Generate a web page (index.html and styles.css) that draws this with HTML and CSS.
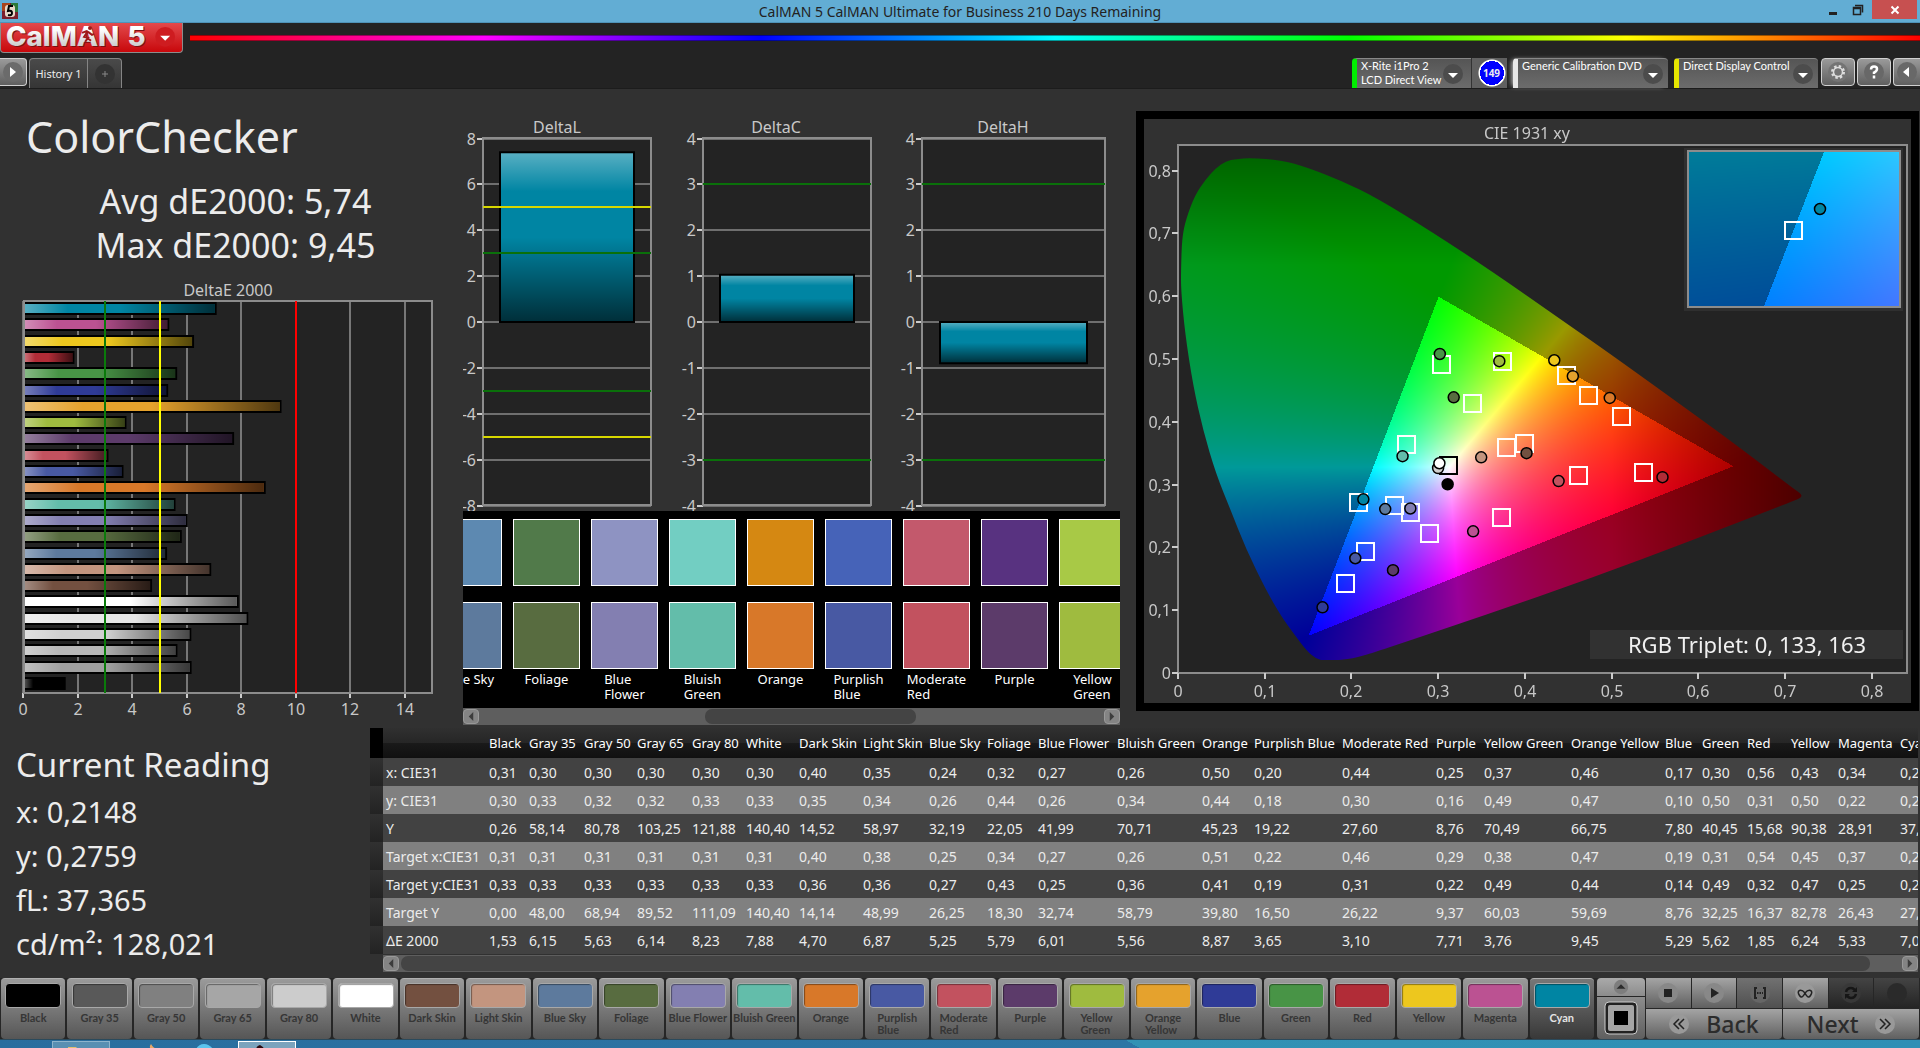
FILE: index.html
```html
<!DOCTYPE html>
<html lang="en">
	<head>
		<meta charset="utf-8">
		<title>CalMAN 5</title>
		<link rel="stylesheet" href="styles.css">
	</head>
	<body>
		<div class="titlebar">
			<svg class="appicon" viewBox="0 0 16 16"><rect width="16" height="16" fill="#7a1f2c"/><rect width="8" height="8" fill="#a8431c"/><rect x="9" width="7" height="9" fill="#2d7a3a"/><rect x="3" y="2" width="10" height="12" rx="3" fill="#e8d8c8"/><path d="M11 3H7L6 8q4-1 4 2t-4 2" fill="none" stroke="#000" stroke-width="2"/></svg>
			<span class="caption">CalMAN 5 CalMAN Ultimate for Business 210 Days Remaining</span>
			<div class="wincontrols">
				<button class="win" aria-label="Minimize"><svg viewBox="0 0 12 12"><path d="M2 9.500h8" stroke="#222" stroke-width="3"/></svg></button>
				<button class="win" aria-label="Restore"><svg viewBox="0 0 12 12"><path d="M1.500 3.500h7v7h-7zM1 4.500h8M3 1.500h7.500v7" fill="none" stroke="#222" stroke-width="1.500"/></svg></button>
				<button class="win close" aria-label="Close"><svg viewBox="0 0 12 12"><path d="M2.500 2.500l7 7M9.500 2.500l-7 7" stroke="#fff" stroke-width="2"/></svg></button>
			</div>
		</div>
		<header class="brandbar">
			<button class="logo" aria-label="CalMAN 5 menu">
				<svg viewBox="0 0 183 31">
					<defs><linearGradient id="metal" x1="0" y1="0" x2="0" y2="1"><stop offset="0.300" stop-color="#fff"/><stop offset="1" stop-color="#b9b9b9"/></linearGradient></defs>
					<text class="logotext shade" x="6" y="24">CalMAN</text><text class="logotext shade" x="129" y="24">5</text>
					<text class="logotext" x="5" y="23">CalMAN</text><text class="logotext" x="128" y="23">5</text>
					<path d="M88 8l-4 6 4 1-3 4M88 9l4 3 2-1M87 8l-5 2M87 15l4 3" fill="none" stroke="#a01818" stroke-width="2"/><circle cx="90" cy="5" r="2" fill="#a01818"/>
					<circle cx="166" cy="14" r="10" fill="#ce1c20"/><path d="M161 13h10l-5 5z" fill="#fff"/>
				</svg>
			</button>
			<div class="rainbow"></div>
		</header>
		<nav class="tabbar">
			<button class="play" aria-label="Show workflow"><svg viewBox="0 0 20 20"><circle cx="10" cy="10" r="10" fill="#6b6b6b"/><path d="M7 5l6 5-6 5z" fill="#fff"/></svg></button>
			<button class="tab">History 1</button>
			<button class="tab add" aria-label="Add history"><svg viewBox="0 0 20 20"><circle cx="10" cy="10" r="10" fill="#333"/><path d="M10 7v6M7 10h6" stroke="#888"/></svg></button>
			<div class="devices">
				<button class="device meter">X-Rite i1Pro 2<br>LCD Direct View<svg class="down" viewBox="0 0 20 20"><circle cx="10" cy="10" r="10"/><path d="M5 9h10l-5 5z"/></svg></button>
				<span class="count">149</span>
				<button class="device source">Generic Calibration DVD<svg class="down" viewBox="0 0 20 20"><circle cx="10" cy="10" r="10"/><path d="M5 9h10l-5 5z"/></svg></button>
				<button class="device display">Direct Display Control<svg class="down" viewBox="0 0 20 20"><circle cx="10" cy="10" r="10"/><path d="M5 9h10l-5 5z"/></svg></button>
				<button class="tool" aria-label="Settings"><svg viewBox="0 0 20 20"><circle cx="10" cy="10" r="10" fill="#747474"/><circle cx="10" cy="10" r="5.500" fill="none" stroke="#ddd" stroke-width="3" stroke-dasharray="2.300 2.020"/><circle cx="10" cy="10" r="4.500" fill="none" stroke="#ddd" stroke-width="1.500"/></svg></button>
				<button class="tool" aria-label="Help"><svg viewBox="0 0 20 20"><circle cx="10" cy="10" r="10" fill="#686868"/><path d="M7 7.500q0-3 3-3t3 2.500q0 2-3 3.500v1.500M10 13.500v3" fill="none" stroke="#fff" stroke-width="2.500"/></svg></button>
				<button class="tool last" aria-label="Collapse"><svg viewBox="0 0 20 20"><circle cx="10" cy="10" r="10" fill="#686868"/><path d="M12 5l-6 5 6 5z" fill="#fff"/></svg></button>
			</div>
		</nav>
		<main>
			<section class="summary">
				<h1>ColorChecker</h1>
				<div class="stats">
					<div>Avg dE2000: 5,74</div>
					<div>Max dE2000: 9,45</div>
				</div>
				<svg class="chart" id="deltaE" viewBox="0 0 463 450"></svg>
			</section>
			<section class="deltas">
				<svg class="chart" id="deltaLCH" viewBox="0 0 657 395"></svg>
				<div class="strip" id="strip"></div>
				<div class="scroll">
					<button class="arrow" aria-label="Scroll left"><svg viewBox="0 0 8 12"><path d="M7 0v12L1 6z"/></svg></button>
					<div class="track"><div class="thumb stripthumb"></div></div>
					<button class="arrow" aria-label="Scroll right"><svg viewBox="0 0 8 12"><path d="M1 0v12l6-6z"/></svg></button>
				</div>
			</section>
			<section class="cie">
				<canvas id="gamut" width="767" height="584"></canvas>
				<svg class="chart" id="cieChart" viewBox="0 0 767 584"></svg>
			</section>
		</main>
		<div class="lower">
			<section class="reading">
				<h2>Current Reading</h2>
				<div>x: 0,2148</div>
				<div>y: 0,2759</div>
				<div>fL: 37,365</div>
				<div>cd/m²: 128,021</div>
			</section>
			<section class="results">
				<div class="tablewrap"><table id="results"></table></div>
				<div class="scroll tablescroll">
					<button class="arrow" aria-label="Scroll left"><svg viewBox="0 0 8 12"><path d="M7 0v12L1 6z"/></svg></button>
					<div class="track"><div class="thumb tablethumb"></div></div>
					<button class="arrow" aria-label="Scroll right"><svg viewBox="0 0 8 12"><path d="M1 0v12l6-6z"/></svg></button>
				</div>
			</section>
		</div>
		<footer class="patches">
			<div class="patchlist" id="patches"></div>
			<div class="window">
				<button class="up" aria-label="Expand"><svg viewBox="0 0 20 20"><circle cx="10" cy="10" r="8" fill="#7d7d7d"/><path d="M5 12h10l-5-5z" fill="#2c2c2c"/></svg></button>
				<button class="pattern" aria-label="Pattern window"><svg viewBox="0 0 34 34"><rect x="1" y="1" width="32" height="32" rx="4" fill="#222" stroke="#ccc"/><rect x="4" y="4" width="26" height="26" rx="2" fill="#a5a5a5"/><rect x="10" y="10" width="14" height="14"/></svg></button>
			</div>
			<div class="controls">
				<button class="ctl" aria-label="Stop"><svg viewBox="0 0 20 20"><circle cx="10" cy="10" r="10" fill="#888"/><path d="M6 6h8v8H6z" fill="#222"/></svg></button>
				<button class="ctl" aria-label="Read"><svg viewBox="0 0 20 20"><circle cx="10" cy="10" r="10" fill="#888"/><path d="M7 5l8 5-8 5z" fill="#222"/></svg></button>
				<button class="ctl mid" aria-label="Read series"><svg viewBox="0 0 20 20"><circle cx="10" cy="10" r="10" fill="#666"/><path d="M7 5H5v10h2M13 5h2v10h-2" fill="none" stroke="#222" stroke-width="2"/><path d="M7 10h6" stroke="#222" stroke-width="2" stroke-dasharray="1.500 1"/></svg></button>
				<button class="ctl" aria-label="Read continuous"><svg viewBox="0 0 20 20"><circle cx="10" cy="10" r="10" fill="#999"/><path d="M10 10q-3-3.500-5.500-2.500t0 5 5.500-2.500q3-3.500 5.500-2.500t0 5-5.500-2.500" fill="none" stroke="#222" stroke-width="1.500"/></svg></button>
				<button class="ctl off" aria-label="Refresh"><svg viewBox="0 0 20 20"><circle cx="10" cy="10" r="10" fill="#383838"/><path d="M5 9q1-4 5-4 2 0 4 2M15 11q-1 4-5 4-2 0-4-2" fill="none" stroke="#161616" stroke-width="2.500"/><path d="M16 4v5h-5zM4 16v-5h5z" fill="#161616"/></svg></button>
				<button class="ctl off" aria-label="Record"><svg viewBox="0 0 20 20"><circle cx="10" cy="10" r="10" fill="#2a2a2a"/></svg></button>
				<button class="ctl nav"><svg viewBox="0 0 20 20"><circle cx="10" cy="10" r="10" fill="#999"/><path d="M10 5l-5 5 5 5M15 5l-5 5 5 5" fill="none" stroke="#222" stroke-width="1.500"/></svg>Back</button>
				<button class="ctl nav">Next<svg viewBox="0 0 20 20"><circle cx="10" cy="10" r="10" fill="#999"/><path d="M5 5l5 5-5 5M10 5l5 5-5 5" fill="none" stroke="#222" stroke-width="1.500"/></svg></button>
			</div>
		</footer>
		<div class="taskbar">
			<div class="task"><svg viewBox="0 0 56 8"><path d="M15 8V5h8l2 2h6v1z" fill="#e0c070"/></svg></div>
			<svg class="pinned" viewBox="0 0 128 8"><path d="M40 8q-1-3 1-5 2 4 6 5z" fill="#e8a868"/><path d="M86 8q3-5 8-5t9 5z" fill="#5cc4ee"/></svg>
			<div class="task active"><svg viewBox="0 0 56 8"><path d="M17 8q0-4 4-5 4 2 5 5z" fill="#2a0a10"/></svg></div>
		</div>
		<script src="script.js"></script>
	</body>
</html>
```

FILE: styles.css
```css
*{
	box-sizing: border-box;
}
body{
	margin: 0;
	min-height: 100vh;
	display: flex;
	flex-direction: column;
	overflow: hidden;
	background: #313131;
	color: #ececec;
	font-family: "Noto Sans", sans-serif;
}
button{
	font-family: inherit;
	border: none;
	padding: 0;
	margin: 0;
	color: inherit;
	cursor: pointer;
}
svg{
	display: block;
}
.titlebar{
	height: 23px;
	background: #62add4;
	border-bottom: 1px solid #4f93b8;
	color: #222;
	display: grid;
	grid-template-columns: 1fr auto 1fr;
	align-items: start;
}
.appicon{
	width: 16px;
	height: 16px;
	margin: 3px 2px;
}
.caption{
	font-size: 14px;
	line-height: 24px;
}
.wincontrols{
	display: flex;
	justify-content: flex-end;
	padding-right: 3px;
}
.win{
	width: 25px;
	height: 19px;
	background: none;
	display: grid;
	place-items: center;
}
.win svg{
	width: 12px;
	height: 12px;
}
.close{
	width: 45px;
	background: #c75050;
	margin-left: 2px;
}
.brandbar{
	background: #232323;
	height: 35px;
	display: flex;
	align-items: flex-start;
}
.logo{
	width: 183px;
	height: 30px;
	border: 1px solid #8c8c8c;
	border-top: none;
	border-radius: 0 0 4px 4px;
	background: linear-gradient(#e34a4c, #c8070b);
}
.logotext{
	font: 800 28px Inter, sans-serif;
	fill: url(#metal);
}
.shade{
	fill: #7c1012;
}
.rainbow{
	flex: 1;
	height: 6px;
	margin: 12px 0 0 7px;
	border-top: 1px solid rgba(0, 0, 0, .4);
	border-bottom: 1px solid rgba(0, 0, 0, .4);
	background: linear-gradient(to right, #f00, #f0f 17%, #00f 33%, #0ff 50%, #0f0 67%, #ff0 83%, #f00);
	background-origin: border-box;
}
.tabbar{
	background: #232323;
	height: 31px;
	display: flex;
	align-items: flex-start;
	border-bottom: 1px solid #1c1c1c;
}
.tabbar svg{
	flex: none;
	width: 20px;
	height: 20px;
}
.play,
.tool{
	height: 28px;
	border: 1px solid #d0d0d0;
	border-radius: 4px;
	background: linear-gradient(#9a9a9a, #5f5f5f);
	display: grid;
	place-items: center;
}
.play{
	width: 27px;
	border-left: none;
	border-radius: 0 4px 4px 0;
}
.tab{
	width: 59px;
	height: 30px;
	margin-left: 2px;
	border: 1px solid #858585;
	border-bottom: none;
	border-radius: 4px 0 0 0;
	background: linear-gradient(#4a4a4a, #353535);
	font-size: 11px;
}
.add{
	width: 34px;
	margin-left: 0;
	border-left: none;
	border-radius: 0 4px 0 0;
	display: grid;
	place-items: center;
}
.devices{
	margin-left: auto;
	display: flex;
}
.device{
	height: 30px;
	border-top: 1px solid #888;
	border-left: 5px solid #ddd;
	border-radius: 4px 4px 0 0;
	background: linear-gradient(#555, #6c6c6c);
	color: #fff;
	font-family: Lato, sans-serif;
	font-size: 11px;
	line-height: 14px;
	text-align: left;
	white-space: nowrap;
	display: flex;
	justify-content: space-between;
	padding: 0 5px 0 4px;
}
.device .down{
	align-self: center;
	fill: #fff;
}
.down circle{
	fill: #4c4c4c;
}
.meter{
	width: 119px;
	border-left-color: #0e0;
	border-radius: 4px 0 0 0;
	padding-right: 8px;
}
.source{
	width: 155px;
	margin-left: 6px;
	border-left-color: #e8e8e8;
	box-shadow: -3px 0 5px -2px #ccc;
}
.display{
	width: 144px;
	margin: 0 3px 0 6px;
	border-left-color: #e6e600;
}
.count{
	width: 36px;
	height: 30px;
	border-left: 1px solid #333;
	background: radial-gradient(circle at 20px 15px, #00f 12px, #fff 12px, #fff 13px, #606060 14px);
	font-size: 10px;
	font-weight: bold;
	line-height: 30px;
	padding-left: 4px;
	text-align: center;
}
.tool{
	width: 34px;
	margin-right: 2px;
}
.last{
	width: 27px;
	margin-right: 0;
	border-right: none;
	border-radius: 4px 0 0 4px;
}
main{
	display: grid;
	grid-template-columns: minmax(0, 463fr) minmax(0, 657fr) minmax(0, 800fr);
	align-items: start;
	padding-bottom: 3px;
}
.chart{
	width: 100%;
	height: auto;
	font-size: 16px;
	fill: #c8c8c8;
}
h1{
	margin: 26px 0 20px 26px;
	font-size: 43px;
	line-height: 44px;
	font-weight: normal;
}
.stats{
	padding-left: 8px;
	margin-bottom: 8px;
	font-size: 34px;
	line-height: 44px;
	text-align: center;
}
.deltas{
	padding-top: 27px;
}
.strip{
	display: flex;
	gap: 11px;
	height: 197px;
	padding-top: 8px;
	overflow: hidden;
	background: #000;
	color: #fff;
}
.sample{
	flex: 0 0 67px;
	display: flex;
	flex-direction: column;
	align-items: center;
	font-size: 13px;
	line-height: 15px;
	white-space: nowrap;
}
.chip{
	width: 67px;
	height: 67px;
	border: 1px solid #fff;
	margin-bottom: 16px;
}
.chip + .chip{
	margin-bottom: 3px;
}
.scroll{
	height: 17px;
	display: flex;
	align-items: center;
	gap: 2px;
	background: #5e5e5e;
}
.arrow{
	width: 16px;
	height: 15px;
	border: 1px solid #999;
	border-radius: 4px;
	background: #848484;
	display: grid;
	place-items: center;
}
.arrow svg{
	width: 6px;
	height: 11px;
	fill: #3c3c3c;
}
.track{
	flex: 1;
}
.thumb{
	height: 15px;
	border-radius: 7px;
	background: #444;
}
.stripthumb{
	width: 34%;
	margin-left: 36%;
}
.tablescroll{
	margin-left: 13px;
}
.tablethumb{
	width: 98%;
}
.cie{
	margin: 22px 1px 0 16px;
	border: 8px solid #000;
	display: grid;
}
.cie > *{
	grid-area: 1 / 1;
	width: 100%;
}
.triplet{
	font-size: 22px;
	fill: #f0f0f0;
}
.lower{
	display: grid;
	grid-template-columns: minmax(0, 370fr) minmax(0, 1548fr) 2px;
	margin-bottom: 6px;
}
.reading{
	padding: 15px 0 0 16px;
	font-size: 29px;
	line-height: 44px;
}
h2{
	margin: 0 0 3px;
	font-size: 33px;
	line-height: 44px;
	font-weight: normal;
}
.tablewrap{
	overflow: hidden;
	height: 227px;
}
table{
	table-layout: fixed;
	width: 1588px;
	border-collapse: collapse;
	font-size: 14px;
	white-space: nowrap;
}
td,
th{
	padding: 0 0 0 3px;
	height: 28px;
	text-align: left;
	font-weight: normal;
}
thead th{
	height: 30px;
	font-size: 13px;
	color: #fff;
}
thead tr{
	background: linear-gradient(#303030, #262626 50%, #1a1a1a 50%, #101010);
}
tbody tr{
	background: #424242;
}
tbody tr:nth-child(even){
	background: #808080;
}
tbody td:first-child{
	background: linear-gradient(#313131, #232323);
}
thead td:first-child{
	background: #000;
}
.patches{
	display: flex;
	gap: 1px;
	height: 61px;
	background: #262626;
}
.patchlist{
	flex: 1;
	display: grid;
	grid-template-columns: repeat(24, minmax(0, 1fr));
	gap: 2px;
	padding: 0 2px 0 1px;
}
.patch{
	display: flex;
	flex-direction: column;
	align-items: center;
	border-top: 1px solid #b0b0b0;
	border-radius: 4px;
	background: linear-gradient(#9a9a9a, #565656);
	color: #363636;
	font: bold 11px/12px Lato, sans-serif;
	text-align: left;
	white-space: nowrap;
}
.patch i{
	width: 56px;
	height: 25px;
	margin: 4px 0;
	border: 1px solid #a8a8a8;
	border-radius: 4px;
	box-shadow: inset 1px 1px 1px rgba(0, 0, 0, .4);
}
.selected{
	background: linear-gradient(#777, #383838);
	color: #e4e4e4;
}
.window{
	width: 48px;
	display: flex;
	flex-direction: column;
	gap: 1px;
}
.window button{
	display: grid;
	place-items: center;
	background: linear-gradient(#aaa, #8c8c8c);
}
.window .up{
	height: 18px;
	border-radius: 4px 4px 0 0;
}
.window .pattern{
	flex: 1;
	background: linear-gradient(#8c8c8c, #5f5f5f);
	border-radius: 0 0 4px 4px;
}
.up svg{
	width: 18px;
	height: 18px;
}
.pattern svg{
	width: 34px;
	height: 34px;
}
.controls{
	width: 273px;
	margin-right: 1px;
	display: grid;
	grid-template-columns: repeat(6, 1fr);
	grid-template-rows: 30px 30px;
	gap: 1px;
}
.ctl{
	display: flex;
	align-items: center;
	justify-content: center;
	background: linear-gradient(#a4a4a4, #606060);
	color: #2c2c2c;
	font-size: 23px;
	font-weight: 500;
	line-height: 28px;
}
.ctl svg{
	width: 20px;
	height: 20px;
}
.mid{
	background: linear-gradient(#717171, #505050);
}
.off{
	background: linear-gradient(#444, #242424);
}
.nav{
	grid-column: span 3;
	gap: 17px;
	border-radius: 0 0 4px 4px;
}
.taskbar{
	flex: 1;
	min-height: 9px;
	height: 9px;
	display: flex;
	padding: 1px 0 0 52px;
	border-top: 1px solid #2a4a5c;
	background: linear-gradient(30deg, #296d9e, #2c76a5 59%, #3292b4 59%, #2f8fb5);
}
.task{
	width: 58px;
	border: 1px solid #8db4cc;
	border-bottom: none;
	background: #588fb2;
}
.pinned{
	width: 128px;
	height: 8px;
}
.active{
	border-color: #fff;
	background: #7ba3bd;
}
```

FILE: script.js
```js
var patches = [
	// name, reference colour, measured colour, column width, x, y, Y, target x, target y, target Y, dE
	["Black", "#000000", "#000000", 40, "0,31", "0,30", "0,26", "0,31", "0,33", "0,00", "1,53"],
	["Gray 35", "#595959", "#a0a0a0", 55, "0,30", "0,33", "58,14", "0,31", "0,33", "48,00", "6,15"],
	["Gray 50", "#808080", "#b8b8b8", 53, "0,30", "0,32", "80,78", "0,31", "0,33", "68,94", "5,63"],
	["Gray 65", "#a6a6a6", "#d0d0d0", 55, "0,30", "0,32", "103,25", "0,31", "0,33", "89,52", "6,14"],
	["Gray 80", "#cccccc", "#e6e6e6", 54, "0,30", "0,33", "121,88", "0,31", "0,33", "111,09", "8,23"],
	["White", "#ffffff", "#ffffff", 53, "0,30", "0,33", "140,40", "0,31", "0,33", "140,40", "7,88"],
	["Dark Skin", "#7b5140", "#735040", 64, "0,40", "0,35", "14,52", "0,40", "0,36", "14,14", "4,70"],
	["Light Skin", "#c49a86", "#c3957f", 66, "0,35", "0,34", "58,97", "0,38", "0,36", "48,99", "6,87"],
	["Blue Sky", "#5d89b1", "#5d7a9d", 58, "0,24", "0,26", "32,19", "0,25", "0,27", "26,25", "5,25"],
	["Foliage", "#517a4a", "#586c40", 51, "0,32", "0,44", "22,05", "0,34", "0,43", "18,30", "5,79"],
	["Blue Flower", "#8e93c2", "#837fb1", 79, "0,27", "0,26", "41,99", "0,27", "0,25", "32,74", "6,01"],
	["Bluish Green", "#72cec2", "#63bdaa", 85, "0,26", "0,34", "70,71", "0,26", "0,36", "58,79", "5,56"],
	["Orange", "#d58812", "#d87829", 52, "0,50", "0,44", "45,23", "0,51", "0,41", "39,80", "8,87"],
	["Purplish Blue", "#4663b8", "#4859a3", 88, "0,20", "0,18", "19,22", "0,22", "0,19", "16,50", "3,65"],
	["Moderate Red", "#c3596c", "#c2525f", 94, "0,44", "0,30", "27,60", "0,46", "0,31", "26,22", "3,10"],
	["Purple", "#583280", "#5c3b6a", 48, "0,25", "0,16", "8,76", "0,29", "0,22", "9,37", "7,71"],
	["Yellow Green", "#a8c946", "#9fbb3f", 87, "0,37", "0,49", "70,49", "0,38", "0,49", "60,03", "3,76"],
	["Orange Yellow", "#e0a82e", "#e5a22d", 94, "0,46", "0,47", "66,75", "0,47", "0,44", "59,69", "9,45"],
	["Blue", "#2c3c9c", "#2f3b97", 37, "0,17", "0,10", "7,80", "0,19", "0,14", "8,76", "5,29"],
	["Green", "#48a048", "#489446", 45, "0,30", "0,50", "40,45", "0,31", "0,49", "32,25", "5,62"],
	["Red", "#b03038", "#b12c37", 44, "0,56", "0,31", "15,68", "0,54", "0,32", "16,37", "1,85"],
	["Yellow", "#e8cc20", "#edc71e", 47, "0,43", "0,50", "90,38", "0,45", "0,47", "82,78", "6,24"],
	["Magenta", "#c05898", "#bb5292", 62, "0,34", "0,22", "28,91", "0,37", "0,25", "26,43", "5,33"],
	["Cyan", "#0088a8", "#0085a3", 62, "0,21", "0,28", "37,37", "0,21", "0,27", "27,41", "7,07"]
];
var rowNames = ["x: CIE31", "y: CIE31", "Y", "Target x:CIE31", "Target y:CIE31", "Target Y", "ΔE 2000"];

function rect(x, y, w, h, attrs){
	return '<rect x="' + x + '" y="' + y + '" width="' + w + '" height="' + h + '" ' + (attrs || "") + '/>';
}

function line(x1, y1, x2, y2, color, w){
	return '<path d="M' + x1 + ' ' + y1 + 'L' + x2 + ' ' + y2 + '" stroke="' + color + '" stroke-width="' + (w || 2) + '"/>';
}

function label(x, y, s, anchor, cls){
	return '<text x="' + x + '" y="' + y + '" text-anchor="' + (anchor || "middle") + '" class="' + (cls || "") + '">' + s + '</text>';
}

// light to dark sheen laid over every bar
function sheen(id, x2, y2){
	return '<linearGradient id="' + id + '" x1="0" y1="0" x2="' + x2 + '" y2="' + y2 + '">' +
		'<stop offset="0" stop-color="#fff" stop-opacity="0.35"/><stop offset="0.23" stop-color="#fff" stop-opacity="0"/>' +
		'<stop offset="0.5" stop-color="#000" stop-opacity="0"/><stop offset="1" stop-color="#000" stop-opacity="0.65"/></linearGradient>';
}

function drawDeltaE(){
	var s = sheen("sheenX", 1, 0) + label(228, 21, "DeltaE 2000") + rect(24, 26, 408, 392, 'fill="#232323"');
	var unit = 27.250, i;
	for(i = 0; i < 15; i += 2){
		var x = Math.round(23 + i * unit);
		s += line(x, 26, x, 418, "#777") + line(x, 418, x, 423, "#ccc") + label(x, 440, i);
	}
	patches.slice().reverse().forEach(function(p, n){
		var w = parseFloat(p[10].replace(",", ".")) * unit;
		var y = Math.round(28 + n * 16.300);
		s += rect(24, y, w - 1, 11, 'fill="' + p[2] + '" stroke="#000" stroke-width="2"') + rect(24, y + 1, w - 2, 9, 'fill="url(#sheenX)"');
	});
	s += rect(24, 26, 408, 392, 'fill="none" stroke="#8c8c8c" stroke-width="2"');
	s += line(105, 26, 105, 418, "#0a7a0a") + line(160, 26, 160, 418, "#ff0") + line(296, 26, 296, 418, "#f00");
	document.getElementById("deltaE").innerHTML = s;
}

function drawDelta(x, w, title, titleX, max, value, limits){
	var top = 22, mid = 206, h = 367, unit = h / 2 / max, i;
	var s = label(titleX, 17, title) + rect(x, top, w, h, 'fill="#232323"');
	for(i = -4; i <= 4; i++){
		var y = Math.round(mid - i * h / 8);
		s += line(x, y, x + w, y, "#6f6f6f") + line(x - 6, y, x, y, "#ccc") + label(x - 7, y + 6, i * max / 4, "end");
	}
	s += rect(x, top, w, h, 'fill="none" stroke="#8c8c8c" stroke-width="2"');
	var bx = x + Math.round(w * .1), by = value > 0 ? mid - value * unit : mid;
	var box = [bx, by, w - 2 * (bx - x), Math.abs(value) * unit];
	s += rect(box[0], box[1], box[2], box[3], 'fill="#0085a3"') + rect(box[0], box[1], box[2], box[3], 'fill="url(#sheenY)" stroke="#000" stroke-width="2"');
	limits.forEach(function(l){
		var y = Math.round(mid - l[0] * unit);
		s += line(x, y, x + w, y, l[1]);
	});
	return s;
}

function drawDeltas(){
	var green = "#0a700a", yellow = "#d8d800";
	document.getElementById("deltaLCH").innerHTML = sheen("sheenY", 0, 1) +
		drawDelta(20, 168, "DeltaL", 94, 8, 7.400, [[5, yellow], [3, green], [-3, green], [-5, yellow]]) +
		drawDelta(240, 168, "DeltaC", 313, 4, 1.030, [[3, green], [-3, green]]) +
		drawDelta(459, 183, "DeltaH", 540, 4, -.900, [[3, green], [-3, green]]);
}

// chromaticity plot
var ox = 34, oy = 554, sx = 867, sy = 628;

function insideGamut(x, y){
	return y < .6 - (x - .3) * .27 / .34 && y < .06 + (x - .15) * 3.600 && y > .06 + (x - .15) * .27 / .49;
}

function chroma(x, y){
	var X = x / y, Z = (1 - x - y) / y;
	var rgb = [3.2406 * X - 1.5372 - .4986 * Z, -.9689 * X + 1.8758 + .0415 * Z, .0557 * X - .2040 + 1.0570 * Z];
	var max = Math.max(rgb[0], rgb[1], rgb[2]);
	var f = insideGamut(x, y) ? 255 : 153;
	f *= 1 - Math.max(0, x - .5) * 2.300;
	f *= 1 - Math.max(0, y - .65) * 2;
	return rgb.map(function(v){
		return f * Math.max(0, v / max);
	});
}

function paint(ctx, left, top, w, h, toXY){
	var img = ctx.createImageData(w, h);
	for(var j = 0; j < h; j++){
		for(var i = 0; i < w; i++){
			var p = toXY(left + i, top + j), c = chroma(p[0], Math.max(.002, p[1])), k = (j * w + i) * 4;
			img.data[k] = c[0];
			img.data[k + 1] = c[1];
			img.data[k + 2] = c[2];
			img.data[k + 3] = 255;
		}
	}
	ctx.putImageData(img, left, top);
}

function drawGamut(){
	var locus = [[182,542],[172,540],[162,531],[150,515],[137,497],[122,471],[102,430],[87,392],[72,355],[59,311],[49,266],[41,214],[37,171],[37,151],[38,119],[42,100],[51,76],[62,60],[72,49],[82,42],[92,40],[107,39],[137,41],[162,48],[198,62],[233,79],[288,113],[349,153],[419,202],[465,234],[540,288],[591,325],[650,370],[660,377],[650,382],[447,460],[238,531],[208,540]];
	var ctx = document.getElementById("gamut").getContext("2d");
	paint(ctx, 0, 0, 767, 584, function(i, j){
		return [(i - ox) / sx, (oy - j) / sy];
	});
	ctx.globalCompositeOperation = "destination-in";
	ctx.beginPath();
	locus.forEach(function(p, n){
		var q = locus[(n + 1) % locus.length], mx = (p[0] + q[0]) / 2, my = (p[1] + q[1]) / 2;
		n ? ctx.quadraticCurveTo(p[0], p[1], mx, my) : ctx.moveTo(mx, my);
	});
	ctx.closePath();
	ctx.fill();
	ctx.globalCompositeOperation = "destination-over";
	ctx.fillStyle = "#232323";
	ctx.fillRect(ox, 25, 729, 529);
	ctx.globalCompositeOperation = "source-over";
	ctx.fillStyle = "#2f2f2f";
	ctx.fillRect(540, 29, 219, 163);
	paint(ctx, 544, 32, 212, 156, function(i, j){
		return [.2078 + (i - 649) / 3700, .268 + (111 - j) / 2640];
	});
}

function drawCie(){
	var targets = [[.3038,.4921],[.3735,.4965],[.4473,.4751],[.4734,.4423],[.511,.409],[.3386,.4304],[.2626,.3642],[.378,.3598],[.3996,.3667],[.5361,.3195],[.461,.315],[.3729,.2483],[.2898,.2224],[.268,.2558],[.2486,.2672],[.2074,.2716],[.2155,.1941],[.1923,.143]];
	var points = [[.302,.508,19],[.3706,.4965,16],[.434,.498,21],[.4554,.4726,17],[.498,.438,12],[.318,.439,9],[.259,.3453,11],[.3497,.3434,7],[.402,.35,6],[.5588,.3119,20],[.439,.3056,14],[.3404,.2256,22],[.248,.1638,15],[.268,.262,10],[.239,.261,8],[.2138,.2766,23],[.2045,.1827,13],[.1667,.1046,18],[.3,.3264,3],[.3015,.334,5],[.311,.3006,0]];
	var s = label(383, 20, "CIE 1931 xy") + rect(ox, 26, 729, 528, 'fill="none" stroke="#8c8c8c" stroke-width="2"'), i;
	for(i = 0; i <= 8; i++){
		var t = i ? "0," + i : "0", x = Math.round(ox + i * sx / 10), y = Math.round(oy - i * sy / 10);
		s += line(x, 554, x, 560, "#ccc") + label(x, 578, t) + line(28, y, 34, y, "#ccc") + label(27, y + 6, t, "end");
	}
	function square(x, y, c){
		return rect(x - 8, y - 8, 17, 17, 'fill="none" stroke="' + c + '" stroke-width="2"');
	}
	function dot(x, y, c){
		return '<circle cx="' + x + '" cy="' + y + '" r="5.500" fill="' + c + '" stroke="#000" stroke-width="1.500"/>';
	}
	targets.forEach(function(p){
		s += square(Math.round(ox + p[0] * sx), Math.round(oy - p[1] * sy), "#fff");
	});
	s += square(304, 346, "#000");
	points.forEach(function(p){
		s += dot(ox + p[0] * sx, oy - p[1] * sy, patches[p[2]][2]);
	});
	s += rect(544, 32, 212, 156, 'fill="none" stroke="#8c8c8c" stroke-width="2"') + square(649, 111, "#fff") + dot(676, 90, "#0085a3");
	s += rect(446, 511, 313, 29, 'fill="#313131"') + label(603, 534, "RGB Triplet: 0, 133, 163", "middle", "triplet");
	document.getElementById("cieChart").innerHTML = s;
}

function fillStrip(){
	var strip = document.getElementById("strip");
	strip.innerHTML = patches.map(function(p){
		var name = p[0].length > 10 ? p[0].replace(" ", "<br>") : p[0];
		return '<div class="sample"><div class="chip" style="background:' + p[1] + '"></div><div class="chip" style="background:' + p[2] + '"></div><span>' + name + '</span></div>';
	}).join("");
	strip.scrollLeft = 8 * 78 + 28;
}

function fillTable(){
	var s = '<colgroup><col style="width:13px"><col style="width:103px">';
	patches.forEach(function(p){
		s += '<col style="width:' + p[3] + 'px">';
	});
	s += '</colgroup><thead><tr><td></td><td></td>';
	patches.forEach(function(p){
		s += '<th scope="col">' + p[0] + '</th>';
	});
	s += '</tr></thead><tbody>';
	rowNames.forEach(function(r, n){
		s += '<tr><td></td><th scope="row">' + r + '</th>';
		patches.forEach(function(p){
			s += '<td>' + p[4 + n] + '</td>';
		});
		s += '</tr>';
	});
	document.getElementById("results").innerHTML = s + '</tbody>';
}

function fillPatches(){
	var twoLines = ["Purplish Blue", "Moderate Red", "Yellow Green", "Orange Yellow"];
	document.getElementById("patches").innerHTML = patches.map(function(p, n){
		var name = twoLines.indexOf(p[0]) >= 0 ? p[0].replace(" ", "<br>") : p[0];
		var color = n < 6 ? p[1] : p[2];
		return '<button class="patch' + (n == 23 ? ' selected' : '') + '"><i style="background:' + color + '"></i><span>' + name + '</span></button>';
	}).join("");
}

drawDeltaE();
drawDeltas();
drawGamut();
drawCie();
fillStrip();
fillTable();
fillPatches();
```
